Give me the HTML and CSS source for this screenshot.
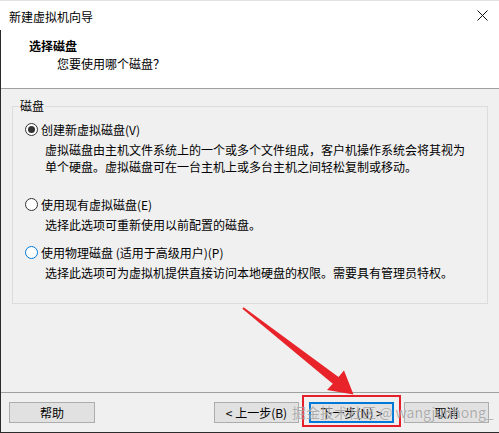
FILE: index.html
```html
<!DOCTYPE html>
<html lang="zh-CN">
<head>
    <meta charset="UTF-8">
    <title>新建虚拟机向导</title>
    <link rel="stylesheet" href="styles.css">
</head>
<body>
    <div class="window">
        <div class="titlebar">
            <span class="title">新建虚拟机向导</span>
            <svg class="close" width="11" height="11" viewBox="0 0 11 11">
                <path d="M0.5 0.5 L10.5 10.5 M10.5 0.5 L0.5 10.5" stroke="#111" stroke-width="1" fill="none"/>
            </svg>
        </div>

        <div class="main">
            <div class="header">
                <div class="h-title">选择磁盘</div>
                <div class="h-sub">您要使用哪个磁盘？</div>
            </div>

            <div class="content">
                <fieldset class="group">
                    <legend>磁盘</legend>
                    <div class="option"><span class="radio checked"></span><span>创建新虚拟磁盘(V)</span></div>
                    <p class="desc">虚拟磁盘由主机文件系统上的一个或多个文件组成，客户机操作系统会将其视为<br>单个硬盘。虚拟磁盘可在一台主机上或多台主机之间轻松复制或移动。</p>

                    <div class="option opt-2"><span class="radio"></span><span>使用现有虚拟磁盘(E)</span></div>
                    <p class="desc">选择此选项可重新使用以前配置的磁盘。</p>

                    <div class="option opt-3"><span class="radio hot"></span><span>使用物理磁盘 (适用于高级用户)(P)</span></div>
                    <p class="desc">选择此选项可为虚拟机提供直接访问本地硬盘的权限。需要具有管理员特权。</p>
                </fieldset>
            </div>

            <div class="footer">
                <button class="btn help">帮助</button>
                <div class="spacer"></div>
                <button class="btn">&lt; 上一步(B)</button>
                <button class="btn focused">下一步(N) &gt;</button>
                <button class="btn">取消</button>
            </div>
        </div>

        <!-- screenshot annotations -->
        <span class="watermark">掘金技术社区 @ wangjunhong_</span>
        <svg class="arrow" width="499" height="433" viewBox="0 0 499 433">
            <polygon fill="#e8232a" points="242.4,308.8 332.8,383.8 327,390 353.5,394.5 344,370.5 338.5,377 243.6,307.2"/>
        </svg>
    </div>
</body>
</html>
```

FILE: styles.css
```css
/* Windows wizard dialog */
* { box-sizing: border-box; }
body { margin: 0; font-family: "Noto Sans CJK SC", "Noto Sans", sans-serif; font-size: 12px; color: #000; }

.window { position: relative; width: 499px; height: 433px; background: #f0f0f0; border-bottom: 1px solid #2b2b2b; overflow: hidden; }

.titlebar { height: 30px; background: #fff; border-top: 1px solid #e2e2e2; display: flex; align-items: center; padding: 0 11px 0 9px; }
.title { flex: 1; line-height: 16px; padding-top: 2px; }
.close { display: block; }

.main { border-left: 1px solid #2b2b2b; }

.header { height: 59px; background: #fff; border-bottom: 1px solid #a0a0a0; padding: 8px 0 0 28px; }
.h-title { font-weight: 700; line-height: 16px; }
.h-sub { line-height: 16px; margin: 2px 0 0 28px; }

.content { height: 303px; padding: 9px 11px 0 11px; }
.group { margin: 0; border: 1px solid #dcdcdc; padding: 7px 0 22px 12px; min-width: 0; }
.group legend { margin-left: -6px; padding: 0 1px; line-height: 16px; }

.option { display: flex; align-items: center; height: 17px; line-height: 17px; }
.opt-2 { margin-top: 21px; }
.opt-3 { margin-top: 11px; }
.radio { width: 13px; height: 13px; border: 1px solid #333; border-radius: 50%; background: #fff; margin-right: 3px; display: flex; align-items: center; justify-content: center; }
.radio.checked::after { content: ""; width: 7px; height: 7px; border-radius: 50%; background: #333; }
.radio.hot { border-color: #0078d7; }

.desc { margin: 3px 0 0 20px; line-height: 17px; }

.footer { height: 40px; border-top: 1px solid #a0a0a0; display: flex; align-items: flex-start; padding: 9px 10px 0 8px; }
.spacer { flex: 1; }
.btn { width: 85px; height: 21px; margin-left: 10px; padding: 0; background: #e1e1e1; border: 1px solid #adadad; font-family: inherit; font-size: 12px; line-height: 17px; color: #000; }
.btn.help { width: 86px; margin-left: 0; }
.btn.focused { position: relative; border: 2px solid #0078d7; }
.btn.focused::after { content: ""; position: absolute; left: -9px; right: -9px; top: -9px; bottom: -6px; border: 2px solid #e5202a; }

.watermark { position: absolute; left: 292px; top: 403px; font-size: 14px; line-height: 18px; color: rgba(100, 100, 100, 0.5); text-shadow: 0 0 1px rgba(255, 255, 255, 0.8); white-space: nowrap; }
.arrow { position: absolute; left: 0; top: 0; pointer-events: none; }
```
